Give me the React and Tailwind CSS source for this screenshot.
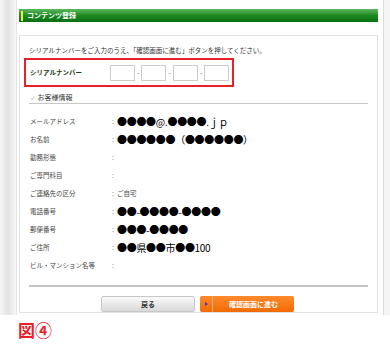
import React from 'react';

const font = { fontFamily: '"Noto Sans CJK JP", "Noto Sans", sans-serif' };

const rows = [
  { label: 'メールアドレス', value: '●●●●@.●●●●.ｊｐ', big: true },
  { label: 'お名前', value: '●●●●●●（●●●●●●）', big: true },
  { label: '勤務形態', value: '' },
  { label: 'ご専門科目', value: '' },
  { label: 'ご連絡先の区分', value: 'ご自宅' },
  { label: '電話番号', value: '●●-●●●●-●●●●', big: true },
  { label: '郵便番号', value: '●●●-●●●●', big: true },
  { label: 'ご住所', value: '●●県●●市●●100', big: true },
  { label: 'ビル・マンション名等', value: '' },
];

function Row({ label, value, big }) {
  return (
    <div className="flex items-center h-[18px]">
      <div className="w-[82px] text-[6.5px] text-[#444] whitespace-nowrap">{label}</div>
      <div className="flex items-center text-[#777] text-[6.5px]">
        <span className="w-[5px]">:</span>
        {big ? (
          <span className="text-[10px] text-black leading-none tracking-[-0.3px]">{value}</span>
        ) : (
          <span className="text-[6.5px] text-[#444]">{value}</span>
        )}
      </div>
    </div>
  );
}

function SerialBox() {
  return <div className="w-[25px] h-[16px] border border-[#ccc] bg-white" />;
}

export default function App() {
  return (
    <div className="w-[390px] h-[351px] bg-white overflow-hidden" style={font}>
      <div className="flex h-[315px]">
        {/* left shadow strip */}
        <div className="w-[17px] h-full bg-gradient-to-r from-[#f6f6f6] via-[#e3e3e3] to-[#f7f7f7] border-r border-[#e6e6e6]" />

        <div className="w-[366px] pl-[2px] pr-[5px] pt-[9px]">
          <div className="h-[13px] flex items-center bg-gradient-to-b from-[#5cb85c] via-[#1b8a22] to-[#077012]">
            <div className="w-[2px] h-[10px] bg-[#e8f03a] ml-[2px]" />
            <span className="ml-[4px] text-[7px] font-bold text-white leading-none">コンテンツ登録</span>
          </div>

          <div className="mt-[13px] h-[278px] border border-[#e2e2e2] bg-white pt-[9px] pl-[4px] pr-[9px]">
            <p className="pl-[5px] text-[6.5px] text-[#333] leading-[10px]">
              シリアルナンバーをご入力のうえ、「確認画面に進む」ボタンを押してください。
            </p>

            <div className="mt-[3px] w-[210px] h-[29px] border-2 border-[#e8202a] flex items-center pl-[4px]">
              <span className="w-[80px] text-[6.5px] font-bold text-[#223a16]">シリアルナンバー</span>
              <div className="flex items-center gap-[2px] text-[7px] text-[#555]">
                <SerialBox />
                <span>-</span>
                <SerialBox />
                <span>-</span>
                <SerialBox />
                <span>-</span>
                <SerialBox />
              </div>
            </div>

            <div className="ml-[5px] mt-[5px] border-b border-[#c8c8c8] h-[12px] flex items-center">
              <span className="text-[5px] text-[#888] mr-[3px] ml-[2px]">✓</span>
              <span className="text-[7px] text-[#333]">お客様情報</span>
            </div>

            <div className="pl-[6px] mt-[9px]">
              {rows.map((r) => (
                <Row key={r.label} {...r} />
              ))}
            </div>

            <div className="ml-[5px] mt-[10px] h-[2px] bg-[#c4c4c4]" />

            <div className="mt-[9px] flex gap-[5px] pl-[77px]">
              <button className="w-[94px] h-[16px] rounded-[2px] border border-[#c8c8c8] bg-gradient-to-b from-[#fafafa] to-[#d9d9d9] text-[7px] font-bold text-[#333] flex items-center justify-center">
                戻る
              </button>
              <button className="w-[94px] h-[16px] rounded-[2px] bg-gradient-to-b from-[#ff8a2a] to-[#f06a00] flex items-center">
                <span className="w-[13px] h-full flex items-center justify-center border-r border-[#ffb070]">
                  <span className="w-0 h-0 border-y-[2px] border-y-transparent border-l-[3px] border-l-[#2a3fd0]" />
                </span>
                <span className="flex-1 text-center text-[7px] font-bold text-white">確認画面に進む</span>
              </button>
            </div>
          </div>
        </div>

        {/* right edge */}
        <div className="w-[7px] h-full border-l border-[#dcdcdc] bg-[#f5f5f5]" />
      </div>

      <div className="pl-[18px] pt-[6px] flex items-center text-[#e8202a] font-bold leading-none">
        <span className="text-[17px]">図</span>
        <span className="text-[17px]">④</span>
      </div>
    </div>
  );
}
